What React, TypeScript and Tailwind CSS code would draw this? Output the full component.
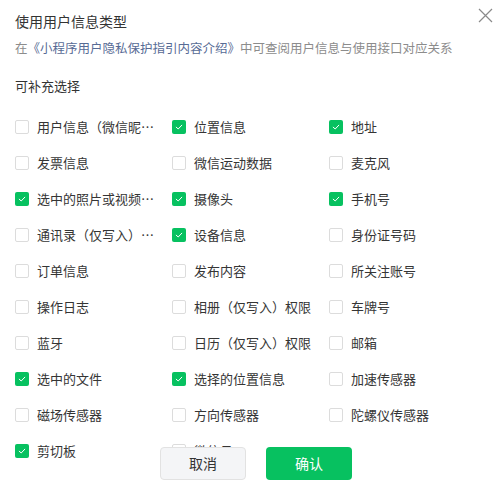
import React from "react";

const items: { label: string; checked: boolean }[] = [
  { label: "用户信息（微信昵称、头像）", checked: false },
  { label: "位置信息", checked: true },
  { label: "地址", checked: true },
  { label: "发票信息", checked: false },
  { label: "微信运动数据", checked: false },
  { label: "麦克风", checked: false },
  { label: "选中的照片或视频信息", checked: true },
  { label: "摄像头", checked: true },
  { label: "手机号", checked: true },
  { label: "通讯录（仅写入）权限", checked: false },
  { label: "设备信息", checked: true },
  { label: "身份证号码", checked: false },
  { label: "订单信息", checked: false },
  { label: "发布内容", checked: false },
  { label: "所关注账号", checked: false },
  { label: "操作日志", checked: false },
  { label: "相册（仅写入）权限", checked: false },
  { label: "车牌号", checked: false },
  { label: "蓝牙", checked: false },
  { label: "日历（仅写入）权限", checked: false },
  { label: "邮箱", checked: false },
  { label: "选中的文件", checked: true },
  { label: "选择的位置信息", checked: true },
  { label: "加速传感器", checked: false },
  { label: "磁场传感器", checked: false },
  { label: "方向传感器", checked: false },
  { label: "陀螺仪传感器", checked: false },
  { label: "剪切板", checked: true },
  { label: "微信号", checked: false },
];

function Box({ checked }: { checked: boolean }) {
  if (checked) {
    return (
      <span className="flex h-[14px] w-[14px] shrink-0 items-center justify-center rounded-[2px] bg-[#07c160]">
        <svg width="10" height="10" viewBox="0 0 10 10" fill="none">
          <path d="M2.2 5.2 L4.2 7 L7.8 3.2" stroke="#ffffff" strokeWidth="1" strokeLinecap="round" strokeLinejoin="round" />
        </svg>
      </span>
    );
  }
  return <span className="h-[14px] w-[14px] shrink-0 rounded-[2px] border border-[#dcdcdc] bg-white" />;
}

export default function App() {
  return (
    <div
      className="relative h-[483px] w-[503px] overflow-hidden bg-white px-[15px]"
      style={{ fontFamily: '"Noto Sans CJK SC", "Noto Sans", sans-serif' }}
    >
      <button className="absolute right-[10px] top-[8px] h-[15px] w-[15px]">
        <svg width="15" height="15" viewBox="0 0 15 15" fill="none">
          <path d="M1 1 L14 14 M14 1 L1 14" stroke="#8a8a8a" strokeWidth="1.2" />
        </svg>
      </button>

      <div className="pt-[11px] text-[14px] leading-[20px] text-[#333333]">使用用户信息类型</div>
      <div className="mt-[7px] whitespace-nowrap text-[12.5px] leading-[20px] text-[#8c8c8c]">
        在<span className="text-[#576b95]">《小程序用户隐私保护指引内容介绍》</span>中可查阅用户信息与使用接口对应关系
      </div>
      <div className="mt-[18px] text-[13px] leading-[20px] text-[#333333]">可补充选择</div>

      <div className="mt-[13px] grid grid-cols-[157px_157px_157px]">
        {items.map((it, i) => (
          <div key={i} className="flex h-[36px] items-center gap-[8px]">
            <Box checked={it.checked} />
            <span className="max-w-[118px] truncate text-[13px] leading-[18px] text-[#353535]">{it.label}</span>
          </div>
        ))}
      </div>

      <div className="absolute left-[160px] top-[447px] flex gap-[20px]">
        <button className="h-[33px] w-[86px] rounded-[4px] border border-[#e2e2e2] bg-[#f4f5f7] text-[14px] text-[#333333]">
          取消
        </button>
        <button className="h-[33px] w-[86px] rounded-[4px] bg-[#07c160] text-[14px] text-white">确认</button>
      </div>
    </div>
  );
}
